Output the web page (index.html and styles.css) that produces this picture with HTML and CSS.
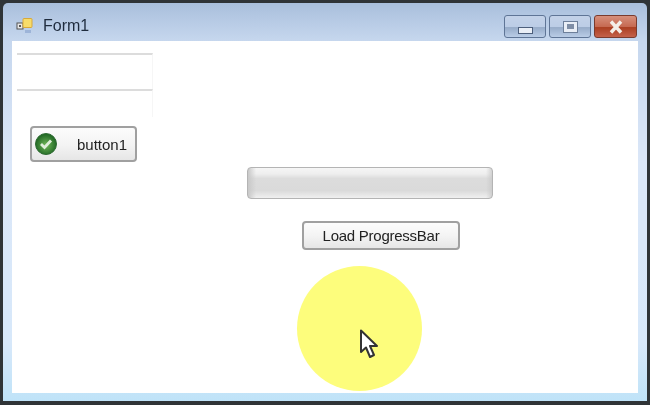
FILE: index.html
```html
<!DOCTYPE html>
<html lang="en">
<head>
  <meta charset="UTF-8" />
  <title>Form1</title>
  <link rel="stylesheet" href="styles.css">
</head>
<body>
  <div class="window">
    <div class="titlebar">
      <svg class="app-icon" width="18" height="18" viewBox="0 0 18 18">
        <rect x="1" y="6" width="6" height="6" fill="#e8e8e8" stroke="#555"/>
        <rect x="3" y="8" width="2" height="2" fill="#555"/>
        <rect x="7" y="1.5" width="9" height="9" rx="1" fill="#f7dc6a" stroke="#d8a93a"/>
        <rect x="9" y="13" width="6" height="3" fill="#9db4d8"/>
      </svg>
      <span class="title">Form1</span>
      <div class="caption-btns">
        <div class="cap-btn">
          <span class="min-glyph"></span>
        </div>
        <div class="cap-btn">
          <span class="max-glyph"></span>
        </div>
        <div class="cap-btn close">
          <svg width="16" height="14" viewBox="0 0 16 14"><path d="M3 1.5 L13 12.5 M13 1.5 L3 12.5" stroke="#f4efe9" stroke-width="3.4"/></svg>
        </div>
      </div>
    </div>

    <div class="client">
      <div class="col-left">
        <div class="textbox first"></div>
        <div class="textbox second"></div>
        <button class="btn btn-icon" type="button">
          <svg width="24" height="24" viewBox="0 0 24 24">
            <defs>
              <radialGradient id="ok" cx="50%" cy="55%" r="60%">
                <stop offset="0" stop-color="#72b85a"/>
                <stop offset="1" stop-color="#125a1a"/>
              </radialGradient>
            </defs>
            <circle cx="12" cy="12" r="10.5" fill="url(#ok)" stroke="#2f6b33"/>
            <path d="M7 12 L10.5 15.5 L17 8.5" fill="none" stroke="#dfeeda" stroke-width="2.8"/>
          </svg>
          <span>button1</span>
        </button>
      </div>
      <div class="col-right">
        <div class="progress"></div>
        <button class="btn btn-load" type="button">Load ProgressBar</button>
      </div>

      <div class="highlight"></div>
      <svg class="cursor" width="20" height="32" viewBox="0 0 20 32">
        <path d="M2 1.5 L2 23 L7 18.5 L11 28 L15 26 L11 17 L18 17 Z" fill="#fff" stroke="#333" stroke-width="2" stroke-linejoin="round"/>
      </svg>
    </div>
  </div>
</body>
</html>
```
FILE: styles.css
```css
* {
  box-sizing: border-box;
}

html, body {
  margin: 0;
  height: 405px;
  overflow: hidden;
}

body {
  font-family: "Liberation Sans", Arial, sans-serif;
  background: #2f3437;
  padding: 3px 3px 4px 3px;
}

.window {
  height: 398px;
  display: flex;
  flex-direction: column;
  padding: 0 9px 8px 9px;
  border-radius: 5px 5px 0 0;
  background: linear-gradient(180deg, #a9bfdc 0, #c6d7ee 38px, #dbe7f8 160px, #d7e8fa 340px, #bfe3f8 398px);
  filter: blur(0.5px);
}

.titlebar {
  flex: 0 0 38px;
  display: flex;
  align-items: center;
  padding-top: 8px;
}

.app-icon {
  margin: 0 0 0 4px;
}

.title {
  margin-left: 9px;
  font-size: 16px;
  color: #1f2c3e;
}

.caption-btns {
  margin-left: auto;
  margin-top: 1px;
  margin-right: 1px;
  display: flex;
  gap: 3px;
}

.cap-btn {
  width: 42px;
  height: 23px;
  display: flex;
  align-items: center;
  justify-content: center;
  border: 1px solid #5f7596;
  border-radius: 3px;
  background: linear-gradient(180deg, #c3d2e8 0, #bccde6 50%, #97acc9 55%, #b9cce6 100%);
}

.cap-btn.close {
  width: 43px;
  border-color: #7a3b2e;
  background: linear-gradient(180deg, #d68f7c 0, #c66a52 50%, #ab3f22 55%, #c4614a 100%);
}

.min-glyph {
  width: 15px;
  height: 7px;
  margin-top: 7px;
  background: #e9eef6;
  border: 1px solid #4d5f7c;
}

.max-glyph {
  width: 15px;
  height: 12px;
  background: #e9eef6;
  border: 1px solid #6d7f9a;
  display: flex;
  align-items: center;
  justify-content: center;
}

.max-glyph::after {
  content: "";
  width: 7px;
  height: 5px;
  background: #7f8ea6;
}

.client {
  flex: 1;
  position: relative;
  display: flex;
  background: #fff;
  padding: 12px 0 0 5px;
}

.col-left {
  width: 136px;
}

.textbox {
  width: 136px;
  border-top: 2px solid #dcdcdc;
  border-right: 1px solid #f6f6f6;
}

.textbox.first {
  height: 36px;
}

.textbox.second {
  height: 28px;
}

.btn {
  font-family: "Liberation Sans", Arial, sans-serif;
  color: #222;
  border: 2px solid #a0a0a0;
  border-radius: 4px;
  background: linear-gradient(180deg, #fcfcfc 0, #f4f4f4 50%, #e6e6e6 100%);
  padding: 0;
}

.btn-icon {
  width: 107px;
  height: 36px;
  margin: 9px 0 0 13px;
  display: flex;
  align-items: center;
  font-size: 15px;
  padding-left: 2px;
}

.btn-icon span {
  margin-left: 19px;
}

.col-right {
  margin-left: 94px;
  padding-top: 114px;
  display: flex;
  flex-direction: column;
}

.progress {
  width: 246px;
  height: 32px;
  border: 1px solid #b4b4b4;
  border-radius: 4px;
  background: linear-gradient(90deg, #c8c8c8 0, rgba(200, 200, 200, 0) 8px, rgba(200, 200, 200, 0) 238px, #c8c8c8 246px),
    linear-gradient(180deg, #f6f6f6 0, #eeeeee 20%, #dcdcdc 35%, #dadada 75%, #f0f0f0 100%);
}

.btn-load {
  width: 158px;
  height: 29px;
  margin: 22px 0 0 55px;
  font-size: 15px;
  letter-spacing: -0.25px;
}

.highlight {
  position: absolute;
  left: 285px;
  top: 225px;
  width: 125px;
  height: 125px;
  border-radius: 50%;
  background: #fdfd7c;
}

.cursor {
  position: absolute;
  left: 347px;
  top: 288px;
}
```
